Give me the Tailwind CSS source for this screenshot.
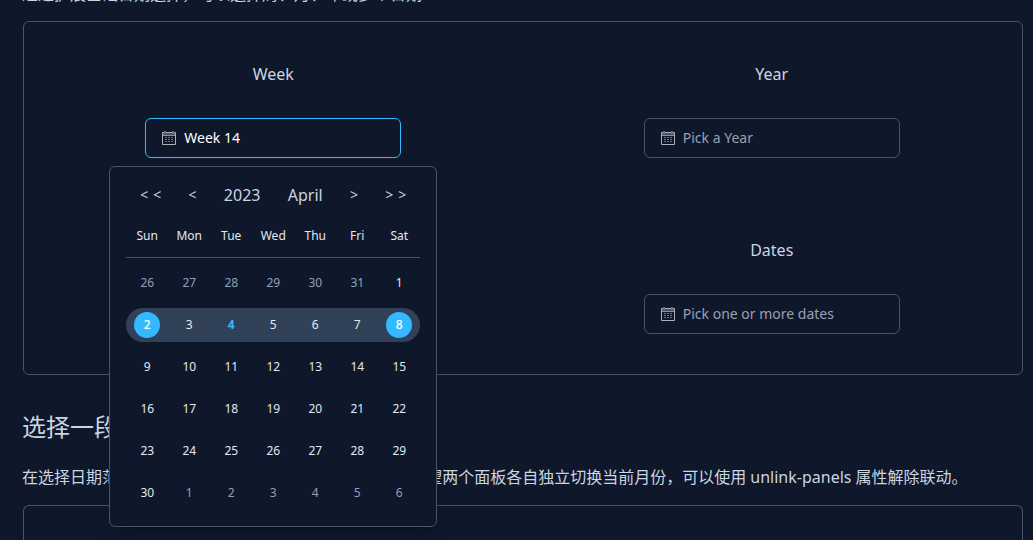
<!DOCTYPE html>
<html lang="zh-CN">
<head>
<meta charset="utf-8">
<title>DatePicker</title>
<script src="https://cdn.jsdelivr.net/npm/@tailwindcss/browser@4"></script>
</head>
<body class="overflow-hidden bg-[#0f172a] font-['Noto_Sans','Noto_Sans_CJK_SC',sans-serif] text-base text-slate-300">
<svg class="hidden" aria-hidden="true">
  <symbol id="calendar" viewBox="0 0 14 14">
    <path d="M0.5 1.5h13v12h-13z" fill="none" stroke="#b0b1b5"/>
    <path d="M1 2h12v3H1z" fill="#4b505d"/>
    <path d="M1 4.5h12" stroke="#8d9098"/>
    <path d="M3 0v3M11 0v3" stroke="#6b7080" stroke-width="2"/>
    <path d="M3 6.500h2M6 6.500h2M9 6.500h2M3 8.500h2M6 8.500h2M9 8.500h2M3 10.500h2M6 10.500h2M9 10.500h2" stroke="#6b7080"/>
  </symbol>
</svg>
<main class="flex h-screen flex-col pr-[10px] pl-[22px]">
  <p class="-mt-[18px] h-6 shrink-0 leading-6">通过扩展基础日期选择，可以选择周、月、年或多个日期</p>

  <section class="mt-[15px] ml-px grid shrink-0 grid-cols-2 rounded-md border border-slate-600 pr-px">
    <div class="flex flex-col items-center gap-8 py-10">
      <label for="week" class="leading-6">Week</label>
      <div class="relative">
        <div class="flex h-10 w-64 items-center gap-2 rounded-md border border-[#33b9ff] px-4">
          <svg class="size-[14px] shrink-0" aria-hidden="true"><use href="#calendar"/></svg>
          <input id="week" type="text" value="Week 14" class="min-w-0 flex-1 bg-transparent text-sm text-white outline-none">
        </div>
        <div class="absolute top-full left-1/2 z-10 mt-2 w-82 -translate-x-1/2 rounded-md border border-slate-600 bg-[#0f172a] px-4 py-3 shadow-lg">
          <div class="flex h-8 items-center justify-between px-[14px] text-base">
            <button type="button" aria-label="Previous year" class="flex gap-[5px] text-sm"><span>&lt;</span><span>&lt;</span></button>
            <button type="button" aria-label="Previous month" class="text-sm">&lt;</button>
            <button type="button">2023</button>
            <button type="button">April</button>
            <button type="button" aria-label="Next month" class="text-sm">&gt;</button>
            <button type="button" aria-label="Next year" class="flex gap-[5px] text-sm"><span>&gt;</span><span>&gt;</span></button>
          </div>
          <table class="mt-1 w-full table-fixed border-separate border-spacing-0 text-center text-xs text-slate-200">
            <thead>
              <tr class="h-[43px]">
                <th class="border-b border-slate-600 font-normal">Sun</th><th class="border-b border-slate-600 font-normal">Mon</th><th class="border-b border-slate-600 font-normal">Tue</th><th class="border-b border-slate-600 font-normal">Wed</th><th class="border-b border-slate-600 font-normal">Thu</th><th class="border-b border-slate-600 font-normal">Fri</th><th class="border-b border-slate-600 font-normal">Sat</th>
              </tr>
            </thead>
            <tbody>
              <tr class="h-1"><td colspan="7"></td></tr>
              <tr class="h-[42px] text-slate-400"><td>26</td><td>27</td><td>28</td><td>29</td><td>30</td><td>31</td><td class="text-slate-200">1</td></tr>
              <tr class="h-[42px]">
                <td><div class="flex h-[34px] items-center justify-center rounded-l-full bg-slate-700"><span class="flex size-[26px] items-center justify-center rounded-full bg-[#33b9ff] font-medium text-white">2</span></div></td>
                <td><div class="flex h-[34px] items-center justify-center bg-slate-700">3</div></td>
                <td><div class="flex h-[34px] items-center justify-center bg-slate-700 font-bold text-[#33b9ff]">4</div></td>
                <td><div class="flex h-[34px] items-center justify-center bg-slate-700">5</div></td>
                <td><div class="flex h-[34px] items-center justify-center bg-slate-700">6</div></td>
                <td><div class="flex h-[34px] items-center justify-center bg-slate-700">7</div></td>
                <td><div class="flex h-[34px] items-center justify-center rounded-r-full bg-slate-700"><span class="flex size-[26px] items-center justify-center rounded-full bg-[#33b9ff] font-medium text-white">8</span></div></td>
              </tr>
              <tr class="h-[42px]"><td>9</td><td>10</td><td>11</td><td>12</td><td>13</td><td>14</td><td>15</td></tr>
              <tr class="h-[42px]"><td>16</td><td>17</td><td>18</td><td>19</td><td>20</td><td>21</td><td>22</td></tr>
              <tr class="h-[42px]"><td>23</td><td>24</td><td>25</td><td>26</td><td>27</td><td>28</td><td>29</td></tr>
              <tr class="h-[42px] text-slate-400"><td class="text-slate-200">30</td><td>1</td><td>2</td><td>3</td><td>4</td><td>5</td><td>6</td></tr>
            </tbody>
          </table>
        </div>
      </div>
    </div>
    <div class="flex flex-col items-center gap-8 py-10">
      <label for="year" class="leading-6">Year</label>
      <div class="flex h-10 w-64 items-center gap-2 rounded-md border border-slate-600 px-4">
        <svg class="size-[14px] shrink-0" aria-hidden="true"><use href="#calendar"/></svg>
        <input id="year" type="text" placeholder="Pick a Year" class="min-w-0 flex-1 bg-transparent text-sm outline-none placeholder:text-gray-400">
      </div>
    </div>
    <div class="col-start-2 flex flex-col items-center gap-8 py-10">
      <label for="dates" class="leading-6">Dates</label>
      <div class="flex h-10 w-64 items-center gap-2 rounded-md border border-slate-600 px-4">
        <svg class="size-[14px] shrink-0" aria-hidden="true"><use href="#calendar"/></svg>
        <input id="dates" type="text" placeholder="Pick one or more dates" class="min-w-0 flex-1 bg-transparent text-sm outline-none placeholder:text-gray-400">
      </div>
    </div>
  </section>

  <h2 class="mt-9 shrink-0 text-2xl leading-8">选择一段时间</h2>
  <p class="mt-[22px] shrink-0 leading-6">在选择日期范围时，默认情况下左右面板会联动。 如果希望两个面板各自独立切换当前月份，可以使用 unlink-panels 属性解除联动。</p>
  <section class="mt-4 ml-px flex-1 rounded-t-md border border-b-0 border-slate-600"></section>
</main>
</body>
</html>
